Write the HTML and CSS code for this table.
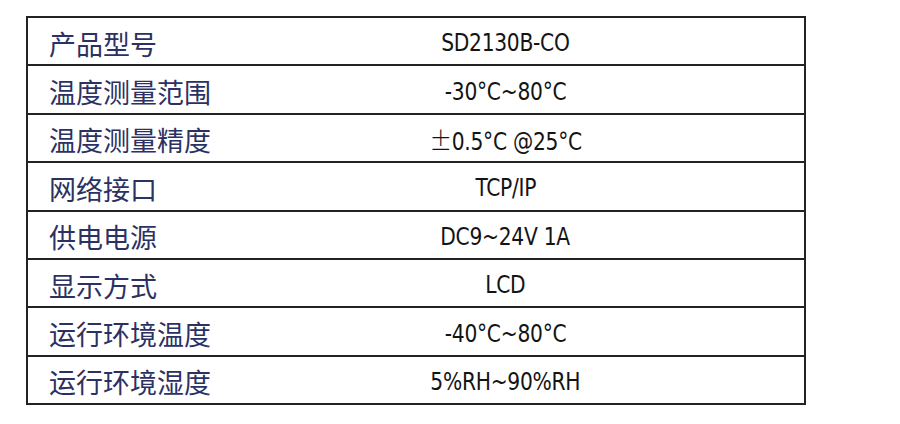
FILE: index.html
```html
<!DOCTYPE html>
<html lang="zh">
<head>
<meta charset="utf-8">
<title>规格参数</title>
<link rel="stylesheet" href="styles.css">
</head>
<body>
<div class="spec">
  <div class="row"><div class="name">产品型号</div><div class="val"><span class="t">SD2130B-CO</span></div></div>
  <div class="row"><div class="name">温度测量范围</div><div class="val"><span class="t">-30°C~80°C</span></div></div>
  <div class="row"><div class="name">温度测量精度</div><div class="val"><span class="t"><span class="pm">±</span>0.5°C @25°C</span></div></div>
  <div class="row"><div class="name">网络接口</div><div class="val"><span class="t">TCP/IP</span></div></div>
  <div class="row"><div class="name">供电电源</div><div class="val"><span class="t">DC9~24V 1A</span></div></div>
  <div class="row"><div class="name">显示方式</div><div class="val"><span class="t">LCD</span></div></div>
  <div class="row"><div class="name">运行环境温度</div><div class="val"><span class="t">-40°C~80°C</span></div></div>
  <div class="row"><div class="name">运行环境湿度</div><div class="val"><span class="t">5%RH~90%RH</span></div></div>
</div>
</body>
</html>
```
FILE: styles.css
```css
html, body {
  margin: 0;
  padding: 0;
  background: #ffffff;
}
body {
  padding: 16px 0 0 26px;
}
.spec {
  width: 776px;
  border: 2px solid #232323;
}
.row {
  display: grid;
  grid-template-columns: 179px 1fr;
  height: 46.4px;
  border-bottom: 2px solid #232323;
  align-items: center;
}
.row:last-child {
  border-bottom: none;
}
.name {
  padding-left: 21px;
  padding-top: 4px;
  font-family: "Noto Sans CJK SC", "Noto Sans", sans-serif;
  font-size: 27px;
  color: #2c3163;
  white-space: nowrap;
}
.val {
  text-align: center;
  padding-top: 3px;
  font-family: "DejaVu Sans Condensed", "DejaVu Sans", sans-serif;
  font-size: 25px;
  color: #141414;
  white-space: nowrap;
}
.t {
  display: inline-block;
  transform: scaleX(0.9);
  letter-spacing: -0.3px;
}
.pm {
  font-family: "Noto Sans CJK SC", sans-serif;
  font-weight: 300;
}
```
